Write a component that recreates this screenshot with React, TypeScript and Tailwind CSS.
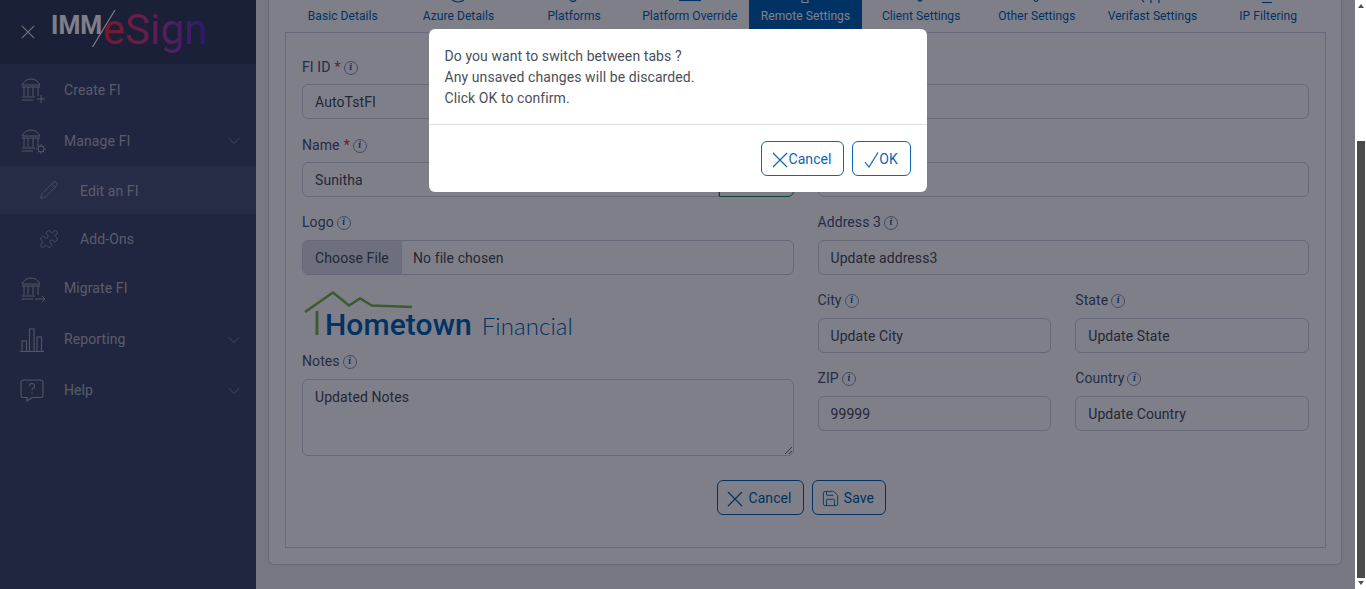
import type { ReactNode } from "react"
import { ChevronDown, Pencil, Puzzle, Save } from "lucide-react"

const font = { fontFamily: "Roboto, sans-serif" }

function Bank({ children }: { children?: ReactNode }) {
    return (
        <svg width="26" height="28" viewBox="-1 0 26 28" fill="none" stroke="currentColor" strokeWidth="1">
            <path d="M1 9 Q4 3 10 3 Q16 3 19 9 Z" />
            <path d="M1 11 H19 M3 11 V20 M7 11 V20 M12 11 V20 M17 11 V20 M1 21 H14 M1 24 H12" />
            {children}
        </svg>
    )
}

function CrossIcon({ size = 16, className = "" }: { size?: number; className?: string }) {
    return (
        <svg width={size} height={size} viewBox="0 0 16 16" fill="none" stroke="currentColor" strokeWidth="1.2" className={className}>
            <path d="M1 1 L15 15 M15 1 L1 15" />
        </svg>
    )
}

function NavRow({ icon, label, chevron, sub, active, nudge }: { icon: ReactNode; label: string; chevron?: boolean; sub?: boolean; active?: boolean; nudge?: boolean }) {
    return (
        <div className={`flex items-center ${sub ? "h-[48px] pl-[39px]" : "h-[51px] pl-[20px]"} pr-[12px] ${active ? "bg-[#4c5878]" : ""}`}>
            <div className={`flex ${sub ? "w-[41px]" : "w-[44px]"} shrink-0 text-[#a5abb9]`}>{icon}</div>
            <span className={`flex-1 text-[14px] text-[#b4b8c4] tracking-[0.1px] ${nudge ? "pt-[2px]" : ""}`}>{label}</span>
            {chevron && <ChevronDown size={20} strokeWidth={0.8} className="text-[#a5abb9]" />}
        </div>
    )
}

function Sidebar() {
    return (
        <aside className="w-[256px] shrink-0 bg-[#404c6a]">
            <div className="flex h-[64px] items-center bg-[#34405c] pl-[21px]">
                <CrossIcon size={14} className="text-[#e8e8e8]" />
                <div className="relative ml-[16px] h-[64px] w-[156px]">
                    <span className="absolute left-0 top-[11px] text-[25px] font-bold leading-[30px] text-white">IMM</span>
                    <svg width="24" height="38" viewBox="0 0 24 38" className="absolute left-[41px] top-[10px] text-white" fill="none" stroke="currentColor" strokeWidth="1.2">
                        <path d="M23 0 L0.5 37" />
                    </svg>
                    <span className="absolute left-[52px] top-[6px] bg-gradient-to-r from-[#ff2a3c] via-[#c03a90] to-[#5a2dd0] bg-clip-text text-[42px] leading-[48px] text-transparent">
                        eSign
                    </span>
                </div>
            </div>
            <NavRow nudge label="Create FI" icon={
                <Bank><path d="M20 19 V27 M16 23 H24" /></Bank>
            } />
            <NavRow nudge label="Manage FI" chevron icon={
                <Bank>
                    <circle cx="20" cy="22" r="3" />
                    <path d="M20 17 V19 M20 25 V27 M15 22 H17 M23 22 H25 M16.5 18.5 L18 20 M22 24 L23.5 25.5 M23.5 18.5 L22 20 M18 24 L16.5 25.5" />
                </Bank>
            } />
            <NavRow nudge sub active label="Edit an FI" icon={<Pencil size={20} strokeWidth={1} />} />
            <div className="h-px" />
            <NavRow sub label="Add-Ons" icon={<Puzzle size={20} strokeWidth={1} />} />
            <NavRow label="Migrate FI" icon={
                <Bank><path d="M14 24 H24 M21 21 L24 24 L21 27" /></Bank>
            } />
            <NavRow label="Reporting" chevron icon={
                <svg width="24" height="26" viewBox="0 0 24 26" fill="none" stroke="currentColor" strokeWidth="1.1">
                    <path d="M0 24.5 H24 M2 24 V14 H6.5 V24 M9.5 24 V2 H14 V24 M17 24 V10 H21.5 V24" />
                </svg>
            } />
            <NavRow label="Help" chevron icon={
                <svg width="24" height="24" viewBox="0 0 24 24" fill="none" stroke="currentColor" strokeWidth="1.1">
                    <path d="M3.5 1 H20.5 A2.5 2.5 0 0 1 23 3.5 V16 A2.5 2.5 0 0 1 20.5 18.5 H12 L7 22 V18.5 H3.5 A2.5 2.5 0 0 1 1 16 V3.5 A2.5 2.5 0 0 1 3.5 1 Z" />
                    <path d="M9.5 7 A2.5 2.5 0 1 1 12.5 9.5 Q12 10 12 11.5 M12 13.5 V14.8" />
                </svg>
            } />
        </aside>
    )
}

const tabs: { label: string; mark?: ReactNode }[] = [
    { label: "Basic Details" },
    { label: "Azure Details", mark: <path d="M4 0 Q10 4 16 0" /> },
    { label: "Platforms", mark: <path d="M7 0 Q10 3 13 0" /> },
    { label: "Platform Override", mark: <path d="M0 0.5 H22" /> },
    { label: "Remote Settings", mark: <path d="M7 0 V2.5 H13 V0" /> },
    { label: "Client Settings", mark: <path d="M8 0 Q10 2 12 0" /> },
    { label: "Other Settings", mark: <path d="M8 0 Q10 3 12 0" /> },
    { label: "Verifast Settings", mark: <path d="M0 0 L2 2 M9 0 V3 M17 0 V3" /> },
    { label: "IP Filtering", mark: <path d="M5 2.5 H15" /> },
]

function Tabs() {
    return (
        <div className="flex h-[32px] overflow-hidden">
            {tabs.map((t) => {
                const active = t.label === "Remote Settings"
                return (
                    <div key={t.label} className="flex flex-1 justify-center">
                        <div className={`flex h-[32px] w-[113px] flex-col items-center justify-between pb-[9px] text-[12px] leading-[14px] ${active ? "bg-[#0066b3] text-white" : "text-[#0066b3]"}`}>
                            <svg width="22" height="4" viewBox="0 0 22 4" fill="none" stroke="currentColor" strokeWidth="1.2">
                                {t.mark}
                            </svg>
                            <span>{t.label}</span>
                        </div>
                    </div>
                )
            })}
        </div>
    )
}

function Info() {
    return (
        <span className="ml-[3px] inline-flex h-[14px] w-[14px] items-center justify-center rounded-full border border-[#8896b8] font-serif text-[9px] font-bold italic leading-none text-[#1a5a9e]">
            i
        </span>
    )
}

function Label({ text, required, raised }: { text: string; required?: boolean; raised?: boolean }) {
    return (
        <label className={`flex h-[21px] items-center text-[14px] leading-[21px] text-[#4a5a78] ${raised ? "-mt-[1px] mb-[7px]" : "mb-[6px]"}`}>
            {text}
            {required && <span className="ml-[4px] text-[#dc3545]">*</span>}
            <Info />
        </label>
    )
}

const inputClass = "h-[35px] w-full rounded-[6px] border border-[#ccd0da] bg-white px-[12px] text-[14px] text-[#495057] outline-none"

function Field({ label, value, required, addon, raised }: { label: string; value?: string; required?: boolean; addon?: boolean; raised?: boolean }) {
    return (
        <div className="mb-[16px]">
            <Label text={label} required={required} raised={raised} />
            {addon ? (
                <div className="flex">
                    <input readOnly value={value ?? ""} className={`${inputClass} rounded-r-none`} />
                    <button className="h-[35px] w-[75px] shrink-0 rounded-r-[6px] border border-[#198754] text-[14px] text-[#198754]">Check</button>
                </div>
            ) : (
                <input readOnly value={value ?? ""} className={inputClass} />
            )}
        </div>
    )
}

function HometownLogo() {
    return (
        <div className="relative mb-[8px] flex h-[53px] items-end pb-[3px] pl-[23px]">
            <svg width="112" height="46" viewBox="0 0 112 46" fill="none" stroke="#7ab648" className="absolute left-0 top-0">
                <path d="M3 21 L31 1.5 L47 14.5 L58 7.5 L70 14.5 L110 16" strokeWidth="2.5" />
                <path d="M15 20 V44" strokeWidth="3" />
            </svg>
            <span className="text-[30px] font-medium leading-[32px] text-[#0066b3]">Hometown</span>
            <span className="ml-[10px] text-[24px] font-light leading-[30px] text-[#0066b3]" style={{ fontFamily: "Lato, sans-serif" }}>Financial</span>
        </div>
    )
}

function FormArea() {
    return (
        <div className="border border-[#ccd2de] px-[16px] pt-[24px] pb-[32px]">
            <div className="grid grid-cols-2 gap-x-[24px]">
                <div>
                    <Field label="FI ID" value="AutoTstFI" required />
                    <Field label="Name" value="Sunitha" required addon />
                    <div className="mb-[16px]">
                        <Label text="Logo" raised />
                        <div className="flex h-[35px] overflow-hidden rounded-[6px] border border-[#ccd0da] text-[14px] text-[#495057]">
                            <div className="flex w-[99px] items-center justify-center border-r border-[#dadfe8] bg-[#dadfe8] pt-[1px]">Choose File</div>
                            <div className="flex items-center pl-[11px] pt-[1px]">No file chosen</div>
                        </div>
                    </div>
                    <HometownLogo />
                    <Label text="Notes" raised />
                    <textarea readOnly defaultValue="Updated Notes" className="block h-[77px] w-full rounded-[6px] border border-[#ccd0da] px-[12px] py-[7px] text-[14px] text-[#495057] outline-none" />
                </div>
                <div>
                    <Field label="Address 1" />
                    <Field label="Address 2" />
                    <Field label="Address 3" value="Update address3" raised />
                    <div className="grid grid-cols-2 gap-x-[24px]">
                        <Field label="City" value="Update City" raised />
                        <Field label="State" value="Update State" raised />
                        <Field label="ZIP" value="99999" raised />
                        <Field label="Country" value="Update Country" raised />
                    </div>
                </div>
            </div>
            <div className="mt-[24px] flex justify-center gap-[8px] pr-[8px] text-[14px] text-[#0066b3]">
                <button className="flex h-[35px] w-[87px] items-center justify-center gap-[5px] rounded-[6px] border border-[#0066b3] pr-[2px] pt-[2px]">
                    <CrossIcon />
                    Cancel
                </button>
                <button className="flex h-[35px] w-[74px] items-center justify-center gap-[4px] rounded-[6px] border border-[#0066b3] pr-[3px] pt-[2px]">
                    <Save size={19} strokeWidth={1.1} />
                    Save
                </button>
            </div>
        </div>
    )
}

function ConfirmDialog() {
    return (
        <div className="fixed top-0 bottom-0 left-0 right-[11px] flex justify-center bg-[#000014]/50 pt-[29px]">
            <div className="h-[163px] w-[498px] rounded-[6px] bg-white">
                <div className="h-[95px] px-[16px] pt-[17px] text-[14px] leading-[21px] text-[#495057]">
                    <p>Do you want to switch between tabs ?</p>
                    <p>Any unsaved changes will be discarded.</p>
                    <p>Click OK to confirm.</p>
                </div>
                <div className="flex justify-end gap-[8px] border-t border-[#dee2e6] p-[16px] text-[14px] text-[#0a66b2]">
                    <button className="flex h-[35px] w-[83px] items-center justify-center rounded-[6px] border border-[#0a66b2] pt-[2px]">
                        <CrossIcon />
                        Cancel
                    </button>
                    <button className="flex h-[35px] w-[59px] items-center justify-center rounded-[6px] border border-[#0a66b2] pt-[2px]">
                        <svg width="15" height="16" viewBox="0 0 15 16" fill="none" stroke="currentColor" strokeWidth="1.2">
                            <path d="M1 10 L5 15 L14 0.5" />
                        </svg>
                        OK
                    </button>
                </div>
            </div>
        </div>
    )
}

function FakeScrollbar() {
    return (
        <div className="flex w-[11px] shrink-0 flex-col items-center bg-white">
            <div className="mt-[4px] h-0 w-0 border-x-[3px] border-b-[4px] border-x-transparent border-b-[#505050]" />
            <div className="mt-[133px] ml-[1px] h-[437px] w-[8px] bg-[#4a4a4a]" />
            <div className="mt-[3px] h-0 w-0 border-x-[3px] border-t-[4px] border-x-transparent border-t-[#505050]" />
        </div>
    )
}

export default function App() {
    return (
        <div className="flex h-screen overflow-hidden bg-white tracking-[0.08px]" style={font}>
            <Sidebar />
            <main className="flex-1 bg-[#eeeeee] pl-[12px] pr-[13px]">
                <div className="h-[565px] rounded-b-[6px] border border-t-0 border-[#ccd2de] bg-white pl-[16px] pr-[15px]">
                    <Tabs />
                    <FormArea />
                </div>
            </main>
            <FakeScrollbar />
            <ConfirmDialog />
        </div>
    )
}
